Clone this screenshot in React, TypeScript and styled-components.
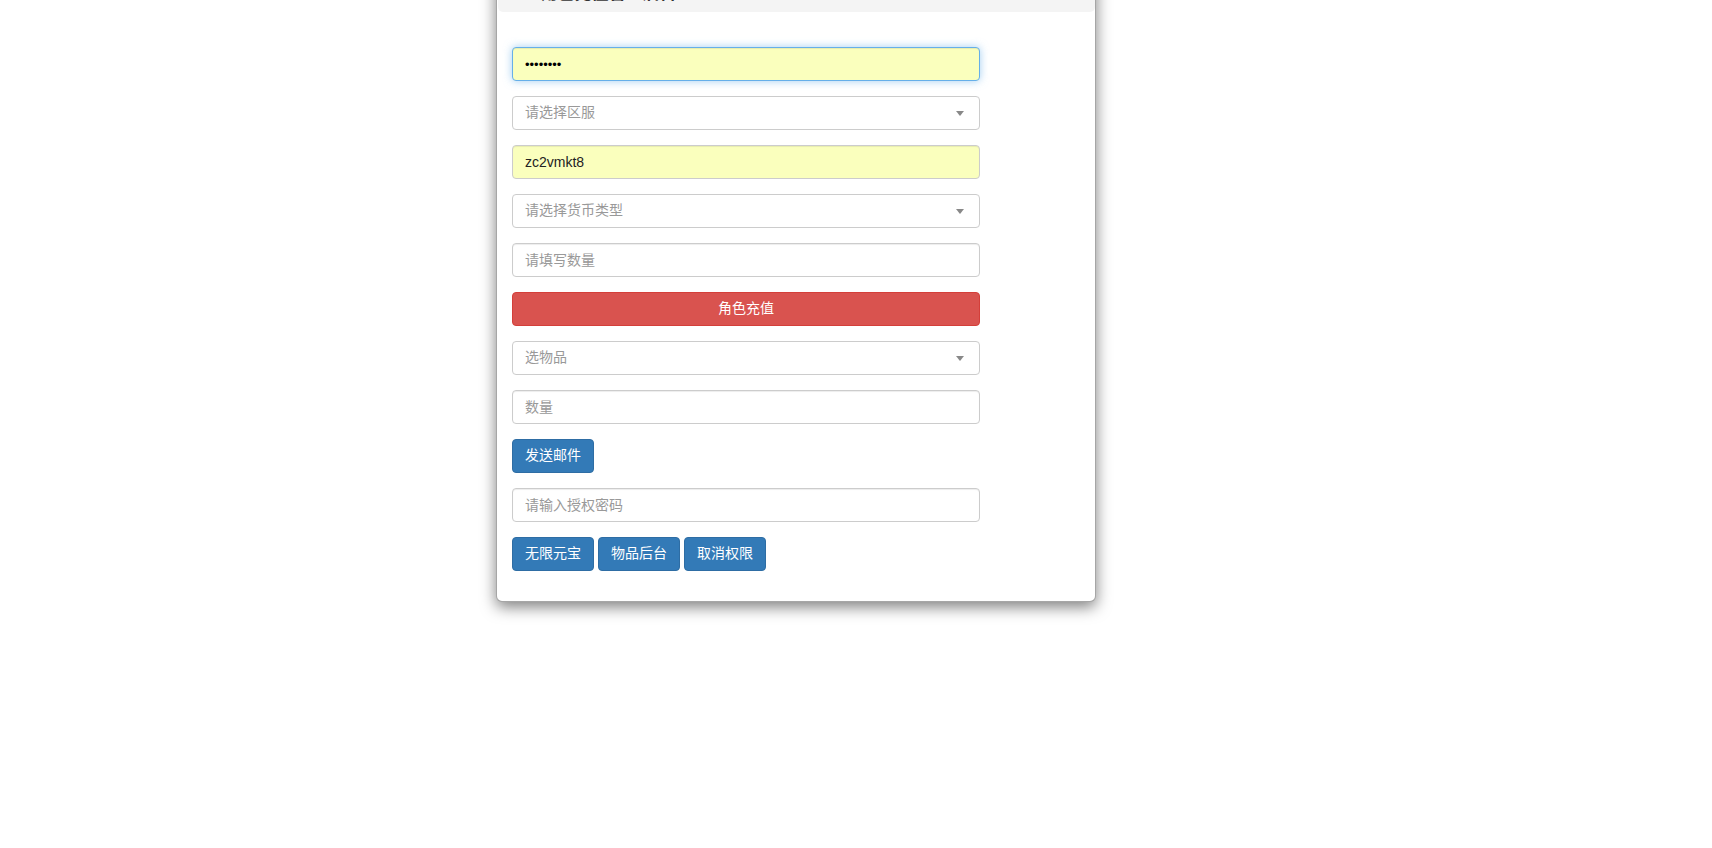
import React from "react"
import styled, { createGlobalStyle } from "styled-components"

const GlobalStyle = createGlobalStyle`
  html, body {
    margin: 0;
    padding: 0;
    background: #fff;
    overflow: hidden;
  }

  body {
    font-family: "Liberation Sans", "Noto Sans CJK SC", Arial, sans-serif;
    font-size: 14px;
    line-height: 1.42857;
    color: #333;
  }

  * {
    box-sizing: border-box;
  }
`

const Page = styled.div`
  width: 1712px;
  height: 848px;
  padding-left: 496px;
`

const Dialog = styled.div`
  width: 600px;
  margin-top: -29px;
  background: #fff;
  border: 1px solid rgba(0, 0, 0, 0.35);
  border-radius: 6px;
  box-shadow: 0 5px 15px rgba(0, 0, 0, 0.5);
`

const Header = styled.div`
  margin: 0 0 0 1px;
  padding: 11px 15px 7px 15px;
  background: #f4f4f4;
  border-radius: 0 0 5px 5px;
`

const Title = styled.h4`
  margin: 0;
  font-size: 17px;
  line-height: 22px;
  font-weight: bold;
  color: #333;
`

const Body = styled.div`
  padding: 35px 15px 0 15px;
`

const Form = styled.form`
  width: 468px;
`

const Group = styled.div`
  position: relative;
  margin-bottom: 15px;
`

const Input = styled.input<{ $autofill?: boolean; $focus?: boolean }>`
  display: block;
  width: 100%;
  height: 34px;
  padding: 6px 12px;
  font-family: "Liberation Sans", "Noto Sans CJK SC", Arial, sans-serif;
  font-size: 14px;
  line-height: 1.42857;
  color: #222;
  background: ${(p) => (p.$autofill ? "#faffbd" : "#fff")};
  border: 1px solid ${(p) => (p.$focus ? "#66afe9" : "#ccc")};
  border-radius: 4px;
  outline: none;
  box-shadow: ${(p) =>
    p.$focus
      ? "inset 0 1px 1px rgba(0,0,0,.075), 0 0 8px rgba(102,175,233,.6)"
      : "inset 0 1px 1px rgba(0,0,0,.075)"};

  &::placeholder {
    color: #999;
  }
`

const Select = styled.div`
  display: flex;
  align-items: center;
  justify-content: space-between;
  height: 34px;
  padding: 6px 12px;
  font-family: "Liberation Sans", "Noto Sans CJK SC", Arial, sans-serif;
  color: #999;
  background: #fff;
  border: 1px solid #ccc;
  border-radius: 4px;
`

const Caret = styled.span`
  width: 0;
  height: 0;
  margin-right: 3px;
  border-style: solid;
  border-width: 5px 4px 0 4px;
  border-color: #888 transparent transparent transparent;
`

const Button = styled.button<{ $variant?: "danger" | "primary"; $block?: boolean }>`
  display: ${(p) => (p.$block ? "block" : "inline-block")};
  width: ${(p) => (p.$block ? "100%" : "auto")};
  height: 34px;
  padding: 6px 12px;
  font-family: "Liberation Sans", "Noto Sans CJK SC", Arial, sans-serif;
  font-size: 14px;
  line-height: 1.42857;
  color: #fff;
  background: ${(p) => (p.$variant === "danger" ? "#d9534f" : "#337ab7")};
  border: 1px solid ${(p) => (p.$variant === "danger" ? "#d43f3a" : "#2e6da4")};
  border-radius: 4px;
  cursor: pointer;
`

const ButtonRow = styled.div`
  display: flex;
  gap: 4px;
  margin-bottom: 15px;
  padding-bottom: 15px;
`

const Dots = styled(Input)`
  font-size: 13px;
  color: #000;
`

export default function App() {
  return (
    <>
      <GlobalStyle />
      <Page>
        <Dialog>
          <Header>
            <Title>GM角色充值管理后台</Title>
          </Header>
          <Body>
            <Form onSubmit={(e) => e.preventDefault()}>
              <Group>
                <Dots type="password" defaultValue="12345678" $autofill $focus />
              </Group>
              <Group>
                <Select>
                  请选择区服
                  <Caret />
                </Select>
              </Group>
              <Group>
                <Input type="text" defaultValue="zc2vmkt8" $autofill />
              </Group>
              <Group>
                <Select>
                  请选择货币类型
                  <Caret />
                </Select>
              </Group>
              <Group>
                <Input type="text" placeholder="请填写数量" />
              </Group>
              <Group>
                <Button type="button" $variant="danger" $block>
                  角色充值
                </Button>
              </Group>
              <Group>
                <Select>
                  选物品
                  <Caret />
                </Select>
              </Group>
              <Group>
                <Input type="text" placeholder="数量" />
              </Group>
              <Group>
                <Button type="button">发送邮件</Button>
              </Group>
              <Group>
                <Input type="text" placeholder="请输入授权密码" />
              </Group>
              <ButtonRow>
                <Button type="button">无限元宝</Button>
                <Button type="button">物品后台</Button>
                <Button type="button">取消权限</Button>
              </ButtonRow>
            </Form>
          </Body>
        </Dialog>
      </Page>
    </>
  )
}
